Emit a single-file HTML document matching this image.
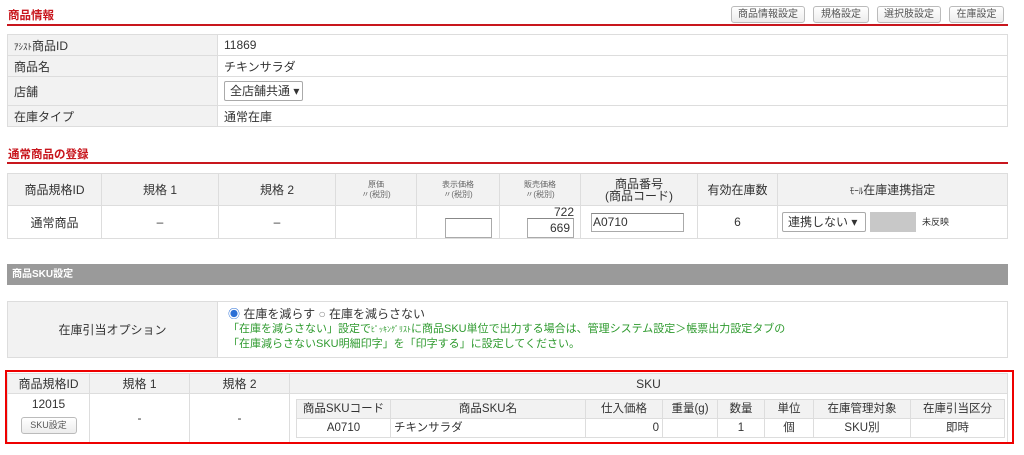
<!DOCTYPE html>
<html><head><meta charset="utf-8">
<style>
*{box-sizing:border-box;margin:0;padding:0}
body{width:1024px;height:455px;background:#fff;font-family:"Liberation Sans","Noto Sans CJK JP",sans-serif;font-size:12px;color:#333;position:relative;overflow:hidden}
.a{position:absolute}
.ttl{color:#c8161d;font-weight:bold;font-size:11.5px}
.rl{height:2px;background:#c8161d;left:7px;width:1001px}
.btn{border:1px solid #bbb;border-radius:3px;background:linear-gradient(#fff,#ececec);font-size:10px;color:#555;text-align:center;line-height:15px;height:17px}
table{border-collapse:collapse;table-layout:fixed}
td{border:1px solid #ddd;padding:0 6px;vertical-align:middle;white-space:nowrap;overflow:hidden}
.g{background:#f2f2f2}
.c{text-align:center}
.sm{font-size:8px;color:#666;line-height:10px}
.inp{border:1px solid #aaa;background:#fff;border-top-color:#888}
.sel{border:1px solid #aaa;border-radius:2px;background:#fff;padding-left:5px;line-height:18px;font-size:12px}
.grn{color:#2e9a2e;font-size:11px;line-height:15px}
.in td{padding:0 3px;font-size:11.5px;line-height:17px}
</style></head><body>
<div class="a ttl" style="left:8px;top:7px">商品情報</div>
<div class="a btn" style="left:731px;top:6px;width:74px">商品情報設定</div>
<div class="a btn" style="left:813px;top:6px;width:56px">規格設定</div>
<div class="a btn" style="left:877px;top:6px;width:64px">選択肢設定</div>
<div class="a btn" style="left:949px;top:6px;width:55px">在庫設定</div>
<div class="a rl" style="top:24px"></div>

<table class="a" style="left:7px;top:34px;width:1001px">
<col style="width:210px"><col>
<tr style="height:21px"><td class="g"><span style="font-size:9px">ｱｼｽﾄ</span>商品ID</td><td>11869</td></tr>
<tr style="height:21px"><td class="g">商品名</td><td>チキンサラダ</td></tr>
<tr style="height:29px"><td class="g">店舗</td><td><span class="sel" style="display:inline-block;width:79px;height:20px">全店舗共通 ▾</span></td></tr>
<tr style="height:21px"><td class="g">在庫タイプ</td><td>通常在庫</td></tr>
</table>

<div class="a ttl" style="left:8px;top:146px">通常商品の登録</div>
<div class="a rl" style="top:162px"></div>

<table class="a" style="left:7px;top:173px;width:1001px">
<col style="width:94px"><col style="width:117px"><col style="width:117px"><col style="width:81px"><col style="width:83px"><col style="width:81px"><col style="width:117px"><col style="width:80px"><col>
<tr style="height:32px" class="g c">
<td class="g">商品規格ID</td><td class="g">規格 1</td><td class="g">規格 2</td>
<td class="g"><div class="sm">原価</div><div class="sm">〃(税別)</div></td>
<td class="g"><div class="sm">表示価格</div><div class="sm">〃(税別)</div></td>
<td class="g"><div class="sm">販売価格</div><div class="sm">〃(税別)</div></td>
<td class="g" style="line-height:12px">商品番号<br>(商品コード)</td>
<td class="g">有効在庫数</td>
<td class="g"><span style="font-size:9px">ﾓｰﾙ</span>在庫連携指定</td></tr>
<tr style="height:33px">
<td class="c">通常商品</td><td class="c">–</td><td class="c">–</td><td></td>
<td><div class="inp" style="width:47px;height:20px;margin:12px 0 0 22px"></div></td>
<td style="text-align:right;padding-right:6px"><div style="line-height:12px">722</div><div class="inp" style="width:47px;height:20px;margin-left:21px;line-height:18px;padding-right:3px">669</div></td>
<td><div class="inp" style="width:93px;height:19px;line-height:17px;padding-left:1px;margin-left:4px">A0710</div></td>
<td class="c">6</td>
<td style="padding-left:4px"><span class="sel" style="display:inline-block;width:84px;height:20px;vertical-align:middle">連携しない ▾</span><span style="display:inline-block;width:46px;height:20px;background:#c8c8c8;vertical-align:middle;margin-left:4px"></span><span style="font-size:9px;margin-left:6px">未反映</span></td></tr>
</table>

<div class="a" style="left:7px;top:264px;width:1001px;height:21px;background:#9a9a9a;color:#fff;font-size:10px;font-weight:bold;line-height:21px;padding-left:5px">商品SKU設定</div>

<table class="a" style="left:7px;top:301px;width:1001px">
<col style="width:210px"><col>
<tr style="height:56px"><td class="g c">在庫引当オプション</td>
<td style="padding-left:10px"><div style="line-height:15px"><span style="color:#2a6fd6">◉</span> 在庫を減らす <span style="color:#888">○</span> 在庫を減らさない</div>
<div class="grn">「在庫を減らさない」設定で<span style="font-size:8px">ﾋﾟｯｷﾝｸﾞﾘｽﾄ</span>に商品SKU単位で出力する場合は、管理システム設定＞帳票出力設定タブの</div>
<div class="grn">「在庫減らさないSKU明細印字」を「印字する」に設定してください。</div></td></tr>
</table>

<div class="a" style="left:5px;top:370px;width:1009px;height:74px;border:2px solid #e00;z-index:2"></div>
<table class="a" style="left:7px;top:373px;width:1001px">
<col style="width:82px"><col style="width:100px"><col style="width:100px"><col>
<tr style="height:20px"><td class="g c">商品規格ID</td><td class="g c">規格 1</td><td class="g c">規格 2</td><td class="g c">SKU</td></tr>
<tr style="height:48px"><td class="c" style="vertical-align:top;padding:3px 0 0"><div style="line-height:14px">12015</div><div class="btn" style="width:56px;margin:6px auto 0;font-size:9px">SKU設定</div></td>
<td class="c">-</td><td class="c">-</td>
<td style="padding:5px 4px 4px 6px">
<table class="in" style="width:709px">
<col style="width:94px"><col style="width:195px"><col style="width:77px"><col style="width:55px"><col style="width:47px"><col style="width:49px"><col style="width:97px"><col>
<tr style="height:19px" class="c"><td class="g">商品SKUコード</td><td class="g">商品SKU名</td><td class="g">仕入価格</td><td class="g">重量(g)</td><td class="g">数量</td><td class="g">単位</td><td class="g">在庫管理対象</td><td class="g">在庫引当区分</td></tr>
<tr style="height:19px"><td class="c">A0710</td><td>チキンサラダ</td><td style="text-align:right">0</td><td></td><td class="c">1</td><td class="c">個</td><td class="c">SKU別</td><td class="c">即時</td></tr>
</table></td></tr>
</table>
</body></html>
